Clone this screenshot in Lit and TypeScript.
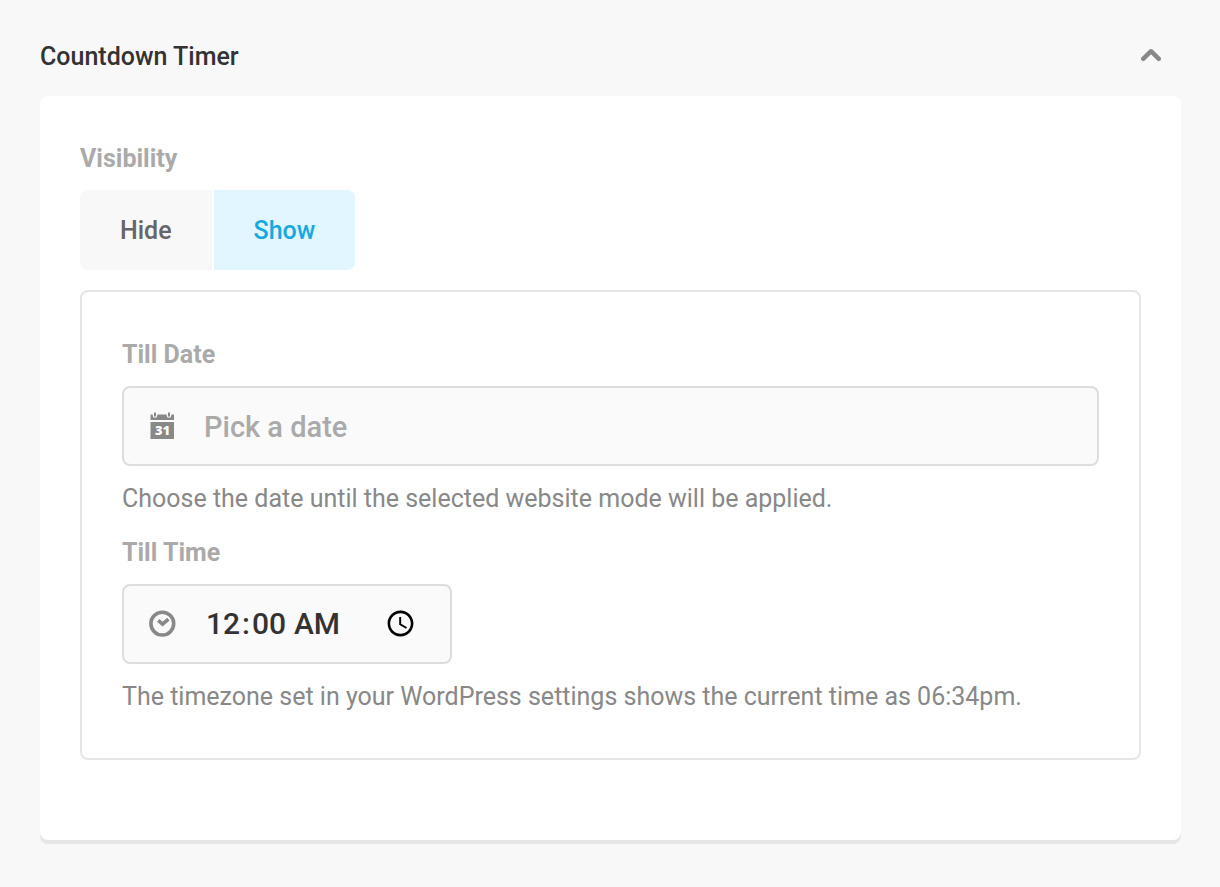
import { LitElement, html, css } from "lit";
import { customElement, state } from "lit/decorators.js";

@customElement("app-root")
export class AppRoot extends LitElement {
  @state() private open = true;
  @state() private visible = true;

  static styles = css`
    :host {
      display: block;
      box-sizing: border-box;
      min-height: 100vh;
      padding: 28px 39px 40px 40px;
      background: #f8f8f8;
      color: #888;
      font: 400 25px/46px Roboto, sans-serif;
    }
    * {
      box-sizing: border-box;
    }
    .header {
      display: flex;
      align-items: center;
      justify-content: space-between;
      height: 58px;
      margin-bottom: 10px;
      padding-right: 20px;
    }
    .title {
      margin: 0;
      color: #333;
      font-size: 25px;
      font-weight: 500;
      line-height: 46px;
    }
    button {
      border: 0;
      font: inherit;
      cursor: pointer;
    }
    .collapse {
      display: flex;
      padding: 0;
      background: none;
    }
    .collapse.closed svg {
      transform: rotate(180deg);
    }
    .card {
      padding: 40px 40px 80px;
      border-radius: 8px;
      background: #fff;
      box-shadow: 0 4px 0 #e6e6e6;
    }
    .label {
      display: block;
      margin-bottom: 8px;
      color: #aaa;
      font-weight: 700;
    }
    .tabs {
      display: flex;
      gap: 2px;
    }
    .tab {
      height: 80px;
      padding: 2px 40px 0;
      background: #f8f8f8;
      color: #666;
      font-weight: 500;
    }
    .tab:first-child {
      border-radius: 8px 0 0 8px;
    }
    .tab:last-child {
      border-radius: 0 8px 8px 0;
    }
    .tab.active {
      background: #e1f6ff;
      color: #17a8e3;
    }
    .box {
      margin-top: 20px;
      padding: 40px 40px 38px;
      border: 2px solid #e6e6e6;
      border-radius: 8px;
    }
    .control {
      display: flex;
      align-items: center;
      height: 80px;
      padding: 0 24px;
      border: 2px solid #ddd;
      border-radius: 8px;
      background: #fafafa;
    }
    .control.time {
      width: 330px;
      padding-right: 31px;
    }
    .control svg {
      flex: none;
    }
    input {
      flex: 1;
      min-width: 0;
      height: 76px;
      margin: 0;
      padding: 2px 0 0 28px;
      border: 0;
      outline: 0;
      background: none;
      color: #333;
      font: 500 29px/44px Roboto, sans-serif;
    }
    input[type="time"] {
      padding-top: 0;
      font-size: 30px;
    }
    input::placeholder {
      color: #aaa;
      opacity: 1;
    }
    input::-webkit-datetime-edit-hour-field,
    input::-webkit-datetime-edit-minute-field,
    input::-webkit-datetime-edit-ampm-field {
      padding: 0 2px;
    }
    input::-webkit-calendar-picker-indicator {
      margin-left: 24px;
    }
    .hint {
      margin: 10px 0 8px;
    }
    .hint:last-child {
      margin-bottom: 0;
    }
  `;

  render() {
    return html`
      <header class="header">
        <h2 class="title">Countdown Timer</h2>
        <button
          class="collapse ${this.open ? "" : "closed"}"
          aria-label="Toggle section"
          aria-expanded=${this.open}
          @click=${() => (this.open = !this.open)}
        >
          <svg width="20" height="18" viewBox="0 0 20 18">
            <path d="M2.2 10.8 10 3.2l7.8 7.6" fill="none" stroke="#888" stroke-width="4.4" stroke-linecap="round" stroke-linejoin="round" />
          </svg>
        </button>
      </header>
      ${this.open ? this.renderCard() : ""}
    `;
  }

  private renderCard() {
    return html`
      <section class="card">
        <span class="label" id="visibility">Visibility</span>
        <div class="tabs" role="group" aria-labelledby="visibility">
          ${[false, true].map(
            (value) => html`<button
              class="tab ${this.visible === value ? "active" : ""}"
              aria-pressed=${this.visible === value}
              @click=${() => (this.visible = value)}
            >${value ? "Show" : "Hide"}</button>`
          )}
        </div>
        ${this.visible ? this.renderFields() : ""}
      </section>
    `;
  }

  private renderFields() {
    return html`
      <div class="box">
        <label class="label" for="date">Till Date</label>
        <div class="control">
          <svg width="28" height="28" viewBox="0 0 28 28" fill="#888" aria-hidden="true">
            <path d="M2.5 2.6h2.2v.8a2.3 2.3 0 0 0 4.6 0v-.8h9.4v.8a2.3 2.3 0 0 0 4.6 0v-.8H26V8H2.5z" />
            <path d="M6 .4h2v3.3a1 1 0 0 1-2 0zM20 .4h2v3.3a1 1 0 0 1-2 0z" />
            <path d="M2.5 10H26v17H2.5z" />
            <text x="14.5" y="23" fill="#fafafa" font-family="Open Sans, sans-serif" font-size="13" font-weight="800" text-anchor="middle">31</text>
          </svg>
          <input id="date" type="text" placeholder="Pick a date" />
        </div>
        <p class="hint">Choose the date until the selected website mode will be applied.</p>
        <label class="label" for="time">Till Time</label>
        <div class="control time">
          <svg width="28" height="28" viewBox="0 0 28 28" fill="none" stroke="#888" aria-hidden="true">
            <circle cx="14.3" cy="13.6" r="11.4" stroke-width="3.6" />
            <path d="m10.2 10.4 4.4 3.7 5.8-5" stroke-width="3.7" />
          </svg>
          <input id="time" type="time" value="00:00" />
        </div>
        <p class="hint">The timezone set in your WordPress settings shows the current time as 06:34pm.</p>
      </div>
    `;
  }
}
